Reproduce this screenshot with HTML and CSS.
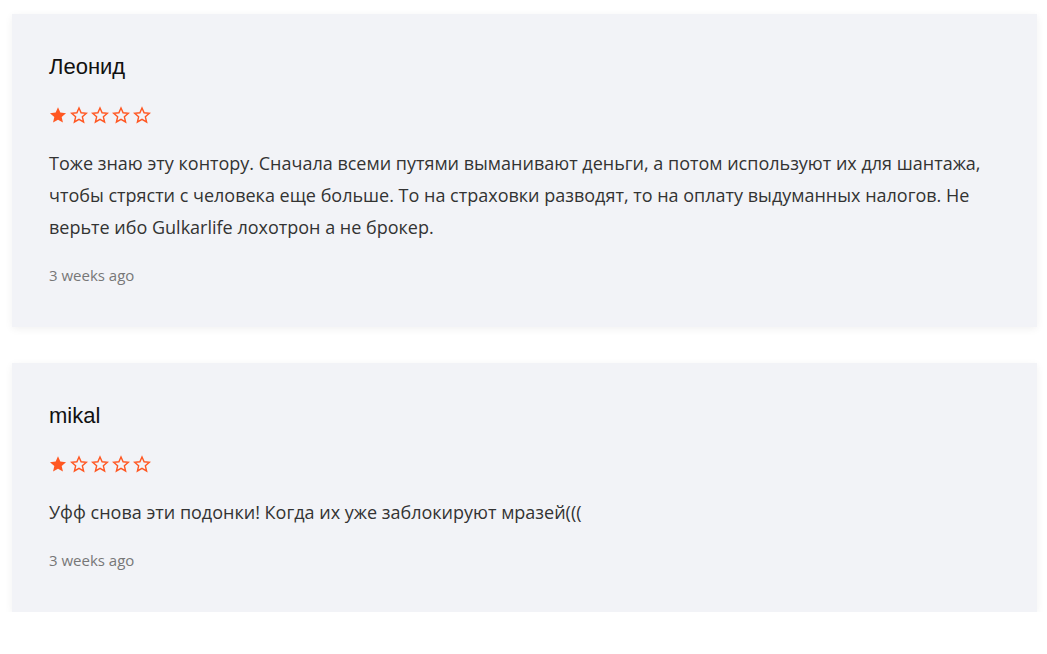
FILE: index.html
```html
<!DOCTYPE html>
<html lang="ru">
<head>
<meta charset="utf-8">
<link rel="stylesheet" href="styles.css">
</head>
<body>
<div class="reviews">
  <div class="review">
    <div class="name">Леонид</div>
    <div class="stars">
      <svg class="star" viewBox="0 0 24 24"><path class="full" d="M12 1.8l3.1 7 7.6.7-5.8 5.1 1.7 7.5L12 18.2l-6.6 3.9 1.7-7.5-5.8-5.1 7.6-.7z"/></svg>
      <svg class="star" viewBox="0 0 24 24"><path class="empty" d="M12 2.6l2.8 6.5 7 .6-5.3 4.7 1.6 6.9L12 17.7l-6.1 3.6 1.6-6.9-5.3-4.7 7-.6z"/></svg>
      <svg class="star" viewBox="0 0 24 24"><path class="empty" d="M12 2.6l2.8 6.5 7 .6-5.3 4.7 1.6 6.9L12 17.7l-6.1 3.6 1.6-6.9-5.3-4.7 7-.6z"/></svg>
      <svg class="star" viewBox="0 0 24 24"><path class="empty" d="M12 2.6l2.8 6.5 7 .6-5.3 4.7 1.6 6.9L12 17.7l-6.1 3.6 1.6-6.9-5.3-4.7 7-.6z"/></svg>
      <svg class="star" viewBox="0 0 24 24"><path class="empty" d="M12 2.6l2.8 6.5 7 .6-5.3 4.7 1.6 6.9L12 17.7l-6.1 3.6 1.6-6.9-5.3-4.7 7-.6z"/></svg>
    </div>
    <p class="text">Тоже знаю эту контору. Сначала всеми путями выманивают деньги, а потом используют их для шантажа, чтобы стрясти с человека еще больше. То на страховки разводят, то на оплату выдуманных налогов. Не верьте ибо Gulkarlife лохотрон а не брокер.</p>
    <div class="date">3 weeks ago</div>
  </div>
  <div class="review">
    <div class="name">mikal</div>
    <div class="stars">
      <svg class="star" viewBox="0 0 24 24"><path class="full" d="M12 1.8l3.1 7 7.6.7-5.8 5.1 1.7 7.5L12 18.2l-6.6 3.9 1.7-7.5-5.8-5.1 7.6-.7z"/></svg>
      <svg class="star" viewBox="0 0 24 24"><path class="empty" d="M12 2.6l2.8 6.5 7 .6-5.3 4.7 1.6 6.9L12 17.7l-6.1 3.6 1.6-6.9-5.3-4.7 7-.6z"/></svg>
      <svg class="star" viewBox="0 0 24 24"><path class="empty" d="M12 2.6l2.8 6.5 7 .6-5.3 4.7 1.6 6.9L12 17.7l-6.1 3.6 1.6-6.9-5.3-4.7 7-.6z"/></svg>
      <svg class="star" viewBox="0 0 24 24"><path class="empty" d="M12 2.6l2.8 6.5 7 .6-5.3 4.7 1.6 6.9L12 17.7l-6.1 3.6 1.6-6.9-5.3-4.7 7-.6z"/></svg>
      <svg class="star" viewBox="0 0 24 24"><path class="empty" d="M12 2.6l2.8 6.5 7 .6-5.3 4.7 1.6 6.9L12 17.7l-6.1 3.6 1.6-6.9-5.3-4.7 7-.6z"/></svg>
    </div>
    <p class="text">Уфф снова эти подонки! Когда их уже заблокируют мразей(((</p>
    <div class="date">3 weeks ago</div>
  </div>
</div>
</body>
</html>
```
FILE: styles.css
```css
html, body {
  margin: 0;
  padding: 0;
  background: #ffffff;
}
.reviews {
  display: flex;
  flex-direction: column;
  gap: 36px;
  padding: 14px 10px 0 12px;
}
.review {
  background: #f2f3f7;
  box-shadow: 0 2px 8px rgba(0, 0, 0, 0.06);
  padding: 41px 37px 42px 37px;
  display: flex;
  flex-direction: column;
}
.name {
  font-family: "Liberation Sans", Arial, sans-serif;
  font-size: 22px;
  line-height: 24px;
  color: #111;
}
.stars {
  display: flex;
  gap: 3px;
  margin-top: 27px;
  height: 18px;
}
.star {
  width: 18px;
  height: 18px;
  display: block;
}
.star .full {
  fill: #ff5722;
}
.star .empty {
  fill: none;
  stroke: #ff5722;
  stroke-width: 1.9;
  stroke-linejoin: miter;
}
.text {
  margin: 23px 0 0 0;
  font-family: "Open Sans", sans-serif;
  font-size: 18px;
  line-height: 32px;
  color: #333;
}
.date {
  margin-top: 22px;
  font-family: "Open Sans", sans-serif;
  font-size: 15px;
  line-height: 20px;
  color: #777;
}
```
